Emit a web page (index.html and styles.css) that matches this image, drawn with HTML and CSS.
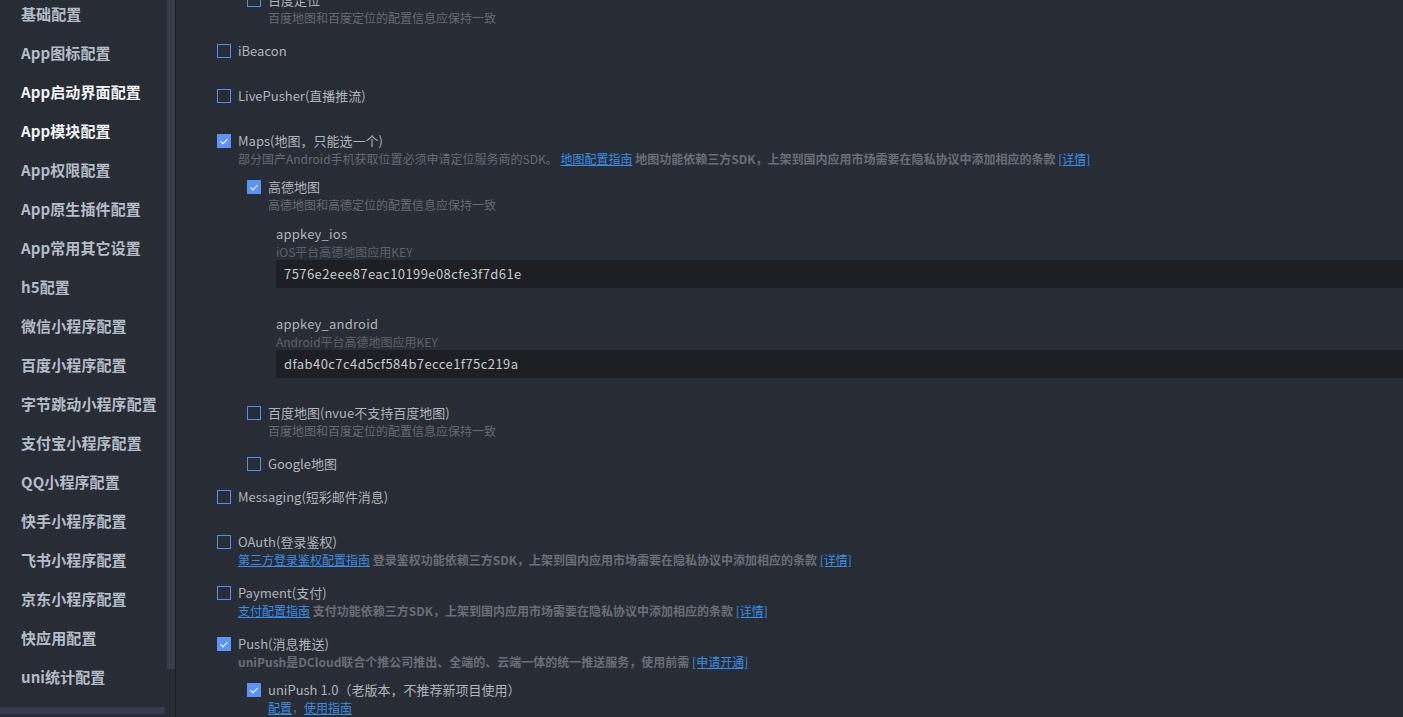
FILE: index.html
```html
<!DOCTYPE html>
<html lang="zh-CN">
<head>
<meta charset="utf-8">
<title>manifest</title>
<link rel="stylesheet" href="styles.css">
</head>
<body>
<div class="app">
  <aside class="sidebar">
    <ul class="nav">
      <li>基础配置</li>
      <li>App图标配置</li>
      <li class="bright">App启动界面配置</li>
      <li class="bright">App模块配置</li>
      <li>App权限配置</li>
      <li>App原生插件配置</li>
      <li>App常用其它设置</li>
      <li>h5配置</li>
      <li>微信小程序配置</li>
      <li>百度小程序配置</li>
      <li>字节跳动小程序配置</li>
      <li>支付宝小程序配置</li>
      <li>QQ小程序配置</li>
      <li>快手小程序配置</li>
      <li>飞书小程序配置</li>
      <li>京东小程序配置</li>
      <li>快应用配置</li>
      <li>uni统计配置</li>
    </ul>
    <div class="vtrack"><div class="vthumb"></div></div>
    <div class="hthumb"></div>
  </aside>
  <div class="divider"></div>
  <main class="content">
    <div class="item top-cut">
      <div class="children first">
        <div class="sub">
          <div class="opt"><span class="cb"></span><span class="lbl">百度定位</span></div>
          <div class="desc">百度地图和百度定位的配置信息应保持一致</div>
        </div>
      </div>
    </div>

    <div class="item">
      <div class="opt"><span class="cb"></span><span class="lbl">iBeacon</span></div>
    </div>

    <div class="item">
      <div class="opt"><span class="cb"></span><span class="lbl">LivePusher(直播推流)</span></div>
    </div>

    <div class="item">
      <div class="opt"><span class="cb on"></span><span class="lbl">Maps(地图，只能选一个)</span></div>
      <div class="desc">部分国产Android手机获取位置必须申请定位服务商的SDK。 <a class="lnk">地图配置指南</a> <b>地图功能依赖三方SDK，上架到国内应用市场需要在隐私协议中添加相应的条款</b> <a class="lnk">[详情]</a></div>
      <div class="children">
        <div class="sub">
          <div class="opt"><span class="cb on"></span><span class="lbl">高德地图</span></div>
          <div class="desc">高德地图和高德定位的配置信息应保持一致</div>
          <div class="fields">
            <div class="field">
              <div class="fname">appkey_ios</div>
              <div class="fdesc">iOS平台高德地图应用KEY</div>
              <div class="input">7576e2eee87eac10199e08cfe3f7d61e</div>
            </div>
            <div class="field">
              <div class="fname">appkey_android</div>
              <div class="fdesc">Android平台高德地图应用KEY</div>
              <div class="input">dfab40c7c4d5cf584b7ecce1f75c219a</div>
            </div>
          </div>
        </div>
        <div class="sub">
          <div class="opt"><span class="cb"></span><span class="lbl">百度地图(nvue不支持百度地图)</span></div>
          <div class="desc">百度地图和百度定位的配置信息应保持一致</div>
        </div>
        <div class="sub">
          <div class="opt"><span class="cb"></span><span class="lbl">Google地图</span></div>
        </div>
      </div>
    </div>

    <div class="item">
      <div class="opt"><span class="cb"></span><span class="lbl">Messaging(短彩邮件消息)</span></div>
    </div>

    <div class="item">
      <div class="opt"><span class="cb"></span><span class="lbl">OAuth(登录鉴权)</span></div>
      <div class="desc"><a class="lnk">第三方登录鉴权配置指南</a> <b>登录鉴权功能依赖三方SDK，上架到国内应用市场需要在隐私协议中添加相应的条款</b> <a class="lnk">[详情]</a></div>
    </div>

    <div class="item">
      <div class="opt"><span class="cb"></span><span class="lbl">Payment(支付)</span></div>
      <div class="desc"><a class="lnk">支付配置指南</a> <b>支付功能依赖三方SDK，上架到国内应用市场需要在隐私协议中添加相应的条款</b> <a class="lnk">[详情]</a></div>
    </div>

    <div class="item">
      <div class="opt"><span class="cb on"></span><span class="lbl">Push(消息推送)</span></div>
      <div class="desc"><b>uniPush是DCloud联合个推公司推出、全端的、云端一体的统一推送服务，使用前需</b> <a class="lnk">[申请开通]</a></div>
      <div class="children">
        <div class="sub">
          <div class="opt"><span class="cb on"></span><span class="lbl">uniPush 1.0（老版本，不推荐新项目使用）</span></div>
          <div class="desc"><a class="lnk">配置</a>，<a class="lnk">使用指南</a></div>
        </div>
      </div>
    </div>
  </main>
</div>
</body>
</html>
```

FILE: styles.css
```css
* { box-sizing: border-box; }
html, body {
  margin: 0;
  padding: 0;
  width: 100%;
  height: 100%;
  overflow: hidden;
  background: #282c34;
  font-family: "Noto Sans CJK SC", "Noto Sans", sans-serif;
}
.app {
  display: flex;
  height: 717px;
  overflow: hidden;
}
.sidebar {
  position: relative;
  width: 175px;
  flex: 0 0 175px;
  display: flex;
  background: #282c34;
  overflow: hidden;
}
.nav {
  list-style: none;
  margin: -6px 0 0 0;
  padding: 0;
  width: 167px;
  flex: 0 0 167px;
}
.nav li {
  height: 39px;
  line-height: 39px;
  padding-left: 21px;
  font-size: 15px;
  font-weight: 700;
  color: #b4bcc8;
  white-space: nowrap;
  letter-spacing: 0.1px;
}
.nav li.bright { color: #f2f4f7; }
.vtrack {
  width: 8px;
  flex: 0 0 8px;
}
.vthumb {
  width: 8px;
  height: 669px;
  background: #363d4a;
}
.hthumb {
  position: absolute;
  left: 0;
  top: 707px;
  width: 165px;
  height: 7px;
  background: #363d4a;
}
.divider {
  width: 1px;
  flex: 0 0 1px;
  background: #1b1d22;
}
.content {
  flex: 1;
  min-width: 0;
  overflow: hidden;
  padding-left: 41px;
  background: #282c34;
}
.item {
  min-height: 30px;
  margin-bottom: 15px;
}
.item.top-cut { min-height: 0; }
.children { margin-top: 10px; padding-left: 30px; }
.children.first { margin-top: -9px; }
.sub { margin-bottom: 15px; }
.sub:last-child { margin-bottom: 0; }
.opt {
  display: flex;
  align-items: center;
  height: 18px;
}
.cb {
  width: 14px;
  height: 14px;
  flex: 0 0 14px;
  border: 1px solid #4f8ef7;
  margin-right: 7px;
  position: relative;
}
.cb.on {
  background: #5a94f5;
  border-color: #5a94f5;
}
.cb.on::after {
  content: "";
  position: absolute;
  left: 4px;
  top: 2px;
  width: 3px;
  height: 6px;
  border-right: 1.5px solid #ffffff;
  border-bottom: 1.5px solid #ffffff;
  transform: rotate(45deg);
}
.lbl {
  font-size: 13px;
  line-height: 18px;
  color: #b0b4ba;
  white-space: nowrap;
}
.desc {
  font-size: 12px;
  line-height: 18px;
  color: #676b73;
  padding-left: 21px;
  white-space: nowrap;
}
.desc b { font-weight: 700; color: #6a6e76; }
.lnk {
  color: #3a8ee6;
  text-decoration: underline;
}
.fields {
  margin-top: 11px;
  padding-left: 29px;
}
.field { margin-bottom: 27px; }
.field:last-child { margin-bottom: 26px; }
.fname {
  font-size: 13px;
  line-height: 18px;
  color: #b0b4ba;
  letter-spacing: 0.2px;
}
.fdesc {
  font-size: 12px;
  line-height: 17px;
  color: #5e626a;
}
.input {
  height: 28px;
  line-height: 28px;
  background: #1e1f24;
  color: #c6cad0;
  font-size: 13px;
  letter-spacing: 0.42px;
  padding-left: 8px;
  white-space: nowrap;
}
```
